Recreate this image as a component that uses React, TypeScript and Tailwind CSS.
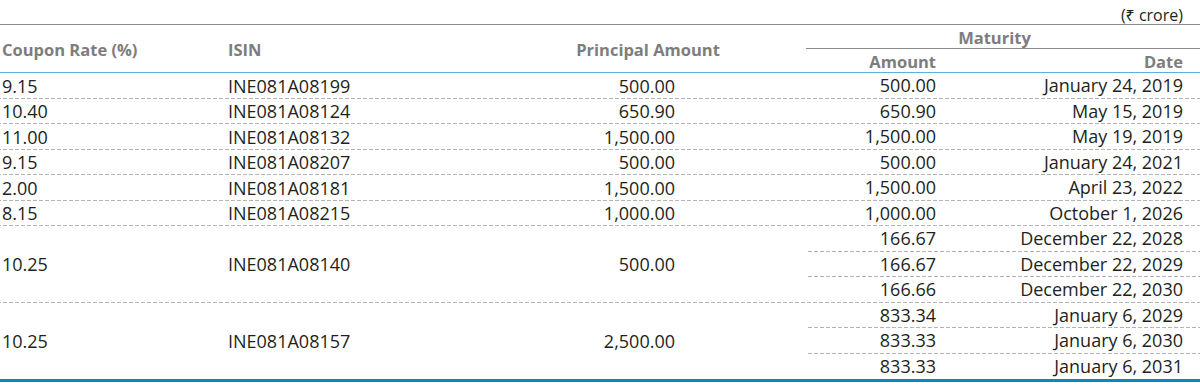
/**
 * App.tsx — Bond redemption schedule (₹ crore)
 * Grouped rows: one coupon / ISIN / principal can mature in several tranches.
 */

/* ── Data ── */

interface Tranche {
  amount: string;
  date: string;
}

interface Bond {
  coupon: string;
  isin: string;
  principal: string;
  maturity: Tranche[];
}

const BONDS: Bond[] = [
  { coupon: '9.15',  isin: 'INE081A08199', principal: '500.00',   maturity: [{ amount: '500.00',   date: 'January 24, 2019' }] },
  { coupon: '10.40', isin: 'INE081A08124', principal: '650.90',   maturity: [{ amount: '650.90',   date: 'May 15, 2019' }] },
  { coupon: '11.00', isin: 'INE081A08132', principal: '1,500.00', maturity: [{ amount: '1,500.00', date: 'May 19, 2019' }] },
  { coupon: '9.15',  isin: 'INE081A08207', principal: '500.00',   maturity: [{ amount: '500.00',   date: 'January 24, 2021' }] },
  { coupon: '2.00',  isin: 'INE081A08181', principal: '1,500.00', maturity: [{ amount: '1,500.00', date: 'April 23, 2022' }] },
  { coupon: '8.15',  isin: 'INE081A08215', principal: '1,000.00', maturity: [{ amount: '1,000.00', date: 'October 1, 2026' }] },
  {
    coupon: '10.25', isin: 'INE081A08140', principal: '500.00',
    maturity: [
      { amount: '166.67', date: 'December 22, 2028' },
      { amount: '166.67', date: 'December 22, 2029' },
      { amount: '166.66', date: 'December 22, 2030' },
    ],
  },
  {
    coupon: '10.25', isin: 'INE081A08157', principal: '2,500.00',
    maturity: [
      { amount: '833.34', date: 'January 6, 2029' },
      { amount: '833.33', date: 'January 6, 2030' },
      { amount: '833.33', date: 'January 6, 2031' },
    ],
  },
];

/* dotted rule drawn as a repeating gradient along the bottom edge */
const DASH =
  'bg-[linear-gradient(to_right,#b4b4b4_0_4px,transparent_4px_6px)] bg-[length:6px_1px] bg-bottom bg-repeat-x';

/* ══════════════════════════════════════════
   Page
══════════════════════════════════════════ */

export default function App() {
  return (
    <main
      className="w-[1200px] h-[385px] bg-white text-[#231f20] overflow-hidden"
      style={{ fontFamily: '"Open Sans", "Noto Sans", "DejaVu Sans", sans-serif' }}
    >
      {/* ── Unit caption ── */}
      <div className="h-[24px] flex items-center justify-end pr-[17px] text-[16px] leading-none pt-[6px]">
        (₹ crore)
      </div>

      {/* ── Header ── */}
      <div className="flex h-[49px] border-t border-[#8c8c8c] border-b border-b-[#5eaee0] text-[16.5px] font-bold text-[#7d7d7d]">
        <div className="flex w-[806px] items-center pt-[3px]">
          <div className="w-[228px] pl-[2px]">Coupon Rate (%)</div>
          <div className="w-[346px]">ISIN</div>
          <div className="w-[148px] text-center">Principal Amount</div>
        </div>
        <div className="flex-1 flex flex-col">
          <div className="h-[24px] border-b border-[#8c8c8c] flex items-center justify-center pr-[17px] pt-[3px]">
            Maturity
          </div>
          <div className="flex-1 flex items-center pt-[1px]">
            <div className="w-[130px] text-right">Amount</div>
            <div className="flex-1 text-right pr-[17px]">Date</div>
          </div>
        </div>
      </div>

      {/* ── Body ── */}
      <div className="text-[18px] leading-none">
        {BONDS.map((b, i) => (
          <div
            key={b.isin}
            className={
              i === BONDS.length - 1
                ? 'flex border-b-[3px] border-[#0a84cc]'
                : `flex ${DASH}`
            }
          >
            <div className="flex w-[806px] items-center">
              <div className="w-[228px] pl-[2px]">{b.coupon}</div>
              <div className="w-[348px]">{b.isin}</div>
              <div className="w-[144px] text-right pr-[45px]">{b.principal}</div>
            </div>
            <div className="flex-1">
              {b.maturity.map((m, j) => (
                <div
                  key={j}
                  className={`flex h-[25.5px] items-center pb-px ${
                    j < b.maturity.length - 1 ? DASH : ''
                  }`}
                >
                  <div className="w-[130px] text-right">{m.amount}</div>
                  <div className="flex-1 text-right pr-[17px]">{m.date}</div>
                </div>
              ))}
            </div>
          </div>
        ))}
      </div>
    </main>
  );
}
